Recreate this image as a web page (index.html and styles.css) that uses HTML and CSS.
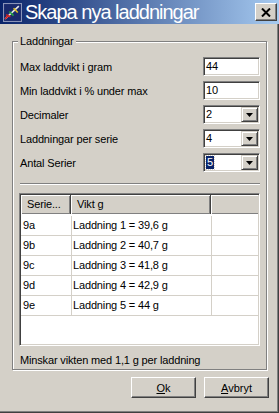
FILE: index.html
```html
<!DOCTYPE html>
<html lang="sv">
<head>
    <meta charset="UTF-8">
    <title>Skapa nya laddningar</title>
    <link rel="stylesheet" href="styles.css">
</head>
<body>
    <div class="window">
        <div class="titlebar">
            <svg class="app-icon" viewBox="0 0 18 18">
                <rect x="0" y="0" width="18" height="18" fill="#8a94b8"/>
                <rect x="1" y="1" width="16" height="16" fill="#1a2a6c"/>
                <path d="M2 15 L15 3" stroke="#e8e8e8" stroke-width="1.5"/>
                <path d="M3 11 L7 13" stroke="#d02020" stroke-width="1.5"/>
                <path d="M6 8 L10 12" stroke="#20a040" stroke-width="1.5"/>
                <path d="M10 5 L14 9" stroke="#e0c020" stroke-width="1.5"/>
                <path d="M2 15 L5 12" stroke="#d02020" stroke-width="1.5"/>
            </svg>
            <span class="title">Skapa nya laddningar</span>
            <span class="close">
                <svg viewBox="0 0 10 9" width="10" height="9">
                    <path d="M1 0.5 L9 8.5 M9 0.5 L1 8.5" stroke="#000" stroke-width="2"/>
                </svg>
            </span>
        </div>

        <div class="content">
            <fieldset class="group">
                <legend>Laddningar</legend>

                <div class="fields">
                    <label>Max laddvikt i gram</label>
                    <div class="edit">44</div>

                    <label>Min laddvikt i % under max</label>
                    <div class="edit">10</div>

                    <label>Decimaler</label>
                    <div class="combo"><span class="value">2</span><span class="drop"><svg viewBox="0 0 7 4" width="7" height="4"><path d="M0 0 H7 L3.5 4 Z" fill="#000"/></svg></span></div>

                    <label>Laddningar per serie</label>
                    <div class="combo"><span class="value">4</span><span class="drop"><svg viewBox="0 0 7 4" width="7" height="4"><path d="M0 0 H7 L3.5 4 Z" fill="#000"/></svg></span></div>

                    <label>Antal Serier</label>
                    <div class="combo"><span class="value"><span class="selected">5</span></span><span class="drop"><svg viewBox="0 0 7 4" width="7" height="4"><path d="M0 0 H7 L3.5 4 Z" fill="#000"/></svg></span></div>
                </div>

                <div class="separator"></div>

                <div class="listview">
                    <div class="lv-head">
                        <div class="lv-col">Serie...</div>
                        <div class="lv-col">Vikt g</div>
                        <div class="lv-col"></div>
                    </div>
                    <div class="lv-body">
                        <div class="lv-row"><div>9a</div><div>Laddning 1 = 39,6 g</div><div></div></div>
                        <div class="lv-row"><div>9b</div><div>Laddning 2 = 40,7 g</div><div></div></div>
                        <div class="lv-row"><div>9c</div><div>Laddning 3 = 41,8 g</div><div></div></div>
                        <div class="lv-row"><div>9d</div><div>Laddning 4 = 42,9 g</div><div></div></div>
                        <div class="lv-row"><div>9e</div><div>Laddning 5 = 44 g</div><div></div></div>
                    </div>
                </div>

                <div class="status">Minskar vikten med 1,1 g per laddning</div>
            </fieldset>

            <div class="buttons">
                <button class="btn"><u>O</u>k</button>
                <button class="btn"><u>A</u>vbryt</button>
            </div>
        </div>
    </div>
</body>
</html>
```

FILE: styles.css
```css
* {box-sizing: border-box;}

body {
    margin: 0;
    font-family: "Liberation Sans", Arial, sans-serif;
    font-size: 11px;
    letter-spacing: -0.15px;
    color: #000;
}

.window {
    width: 279px;
    height: 413px;
    background: #d4d0c8;
    box-shadow: inset -1px -1px #404040, inset -2px -2px #808080;
}

/* title bar */
.titlebar {
    height: 24px;
    display: flex;
    align-items: center;
    padding: 0 2px 0 3px;
    background: linear-gradient(to right, #0a246a, #a6caf0);
    color: #fff;
}
.app-icon {width: 19px; height: 19px; flex: none;}
.title {
    flex: 1;
    margin-left: 3px;
    font-size: 20px;
    letter-spacing: -1px;
    line-height: 24px;
    white-space: nowrap;
}
.close {
    width: 22px;
    height: 18px;
    display: flex;
    align-items: center;
    justify-content: center;
    background: #d4d0c8;
    border: 1px solid;
    border-color: #fff #404040 #404040 #fff;
    box-shadow: inset -1px -1px #808080;
}

/* dialog body */
.content {padding: 11px 0 0 12px;}

.group {
    width: 255px;
    margin: 0;
    padding: 9px 6px 2px 7px;
    border: 1px solid #808080;
    box-shadow: inset 1px 1px #fff, 1px 1px #fff;
    min-inline-size: 0;
}
.group legend {
    padding: 0 2px;
    margin-left: -2px;
    line-height: 13px;
    background: #d4d0c8;
}

.fields {
    display: grid;
    grid-template-columns: 1fr 57px;
    grid-auto-rows: 19px;
    row-gap: 5px;
    align-items: center;
}
.fields label {white-space: nowrap;}

.edit, .combo {
    height: 19px;
    background: #fff;
    border: 1px solid;
    border-color: #808080 #fff #fff #808080;
    box-shadow: inset 1px 1px #404040, inset -1px -1px #d4d0c8;
    line-height: 15px;
}
.edit {padding: 1px 2px;}
.combo {display: flex; padding: 1px;}
.combo .value {flex: 1; padding: 1px 0 0 1px; line-height: 13px;}
.combo .selected {
    display: inline-block;
    padding: 0 1px;
    background: #0a246a;
    color: #fff;
    outline: 1px dotted #d4d0c8;
}
.drop {
    width: 17px;
    height: 15px;
    display: flex;
    align-items: center;
    justify-content: center;
    background: #d4d0c8;
    border: 1px solid;
    border-color: #d4d0c8 #404040 #404040 #d4d0c8;
    box-shadow: inset 1px 1px #fff, inset -1px -1px #808080;
}

.separator {
    height: 2px;
    margin-top: 11px;
    border-top: 1px solid #808080;
    border-bottom: 1px solid #fff;
}

/* list view */
.listview {
    width: 241px;
    height: 153px;
    margin: 8px 0 0 -1px;
    padding: 1px;
    background: #fff;
    border: 1px solid;
    border-color: #808080 #fff #fff #808080;
    box-shadow: inset 1px 1px #404040, inset -1px -1px #d4d0c8;
}
.lv-head {
    display: grid;
    grid-template-columns: 50px 140px 1fr;
    height: 19px;
}
.lv-col {
    padding-left: 6px;
    line-height: 18px;
    background: #d4d0c8;
    border-right: 1px solid #404040;
    box-shadow: inset 1px 1px #fff, inset -1px -1px #808080;
}
.lv-col:last-child {border-right: 0; box-shadow: inset 1px 1px #fff, inset 0 -1px #808080;}
.lv-body {padding-top: 2px;}
.lv-row {
    display: grid;
    grid-template-columns: 51px 140px 1fr;
    height: 20px;
    border-bottom: 1px solid #d4d0c8;
    line-height: 19px;
}
.lv-row div {border-right: 1px solid #d4d0c8;}
.lv-row div:first-child {padding-left: 2px;}
.lv-row div:nth-child(2) {padding-left: 1px;}
.lv-row div:last-child {border-right: 0;}

.status {margin-top: 8px; line-height: 13px;}

/* buttons */
.buttons {
    display: flex;
    justify-content: flex-end;
    gap: 8px;
    margin-top: 7px;
    padding-right: 10px;
}
.btn {
    width: 65px;
    height: 21px;
    padding: 0;
    font: inherit;
    color: #000;
    background: #d4d0c8;
    border: 1px solid;
    border-color: #fff #404040 #404040 #fff;
    box-shadow: inset -1px -1px #808080;
}
```
